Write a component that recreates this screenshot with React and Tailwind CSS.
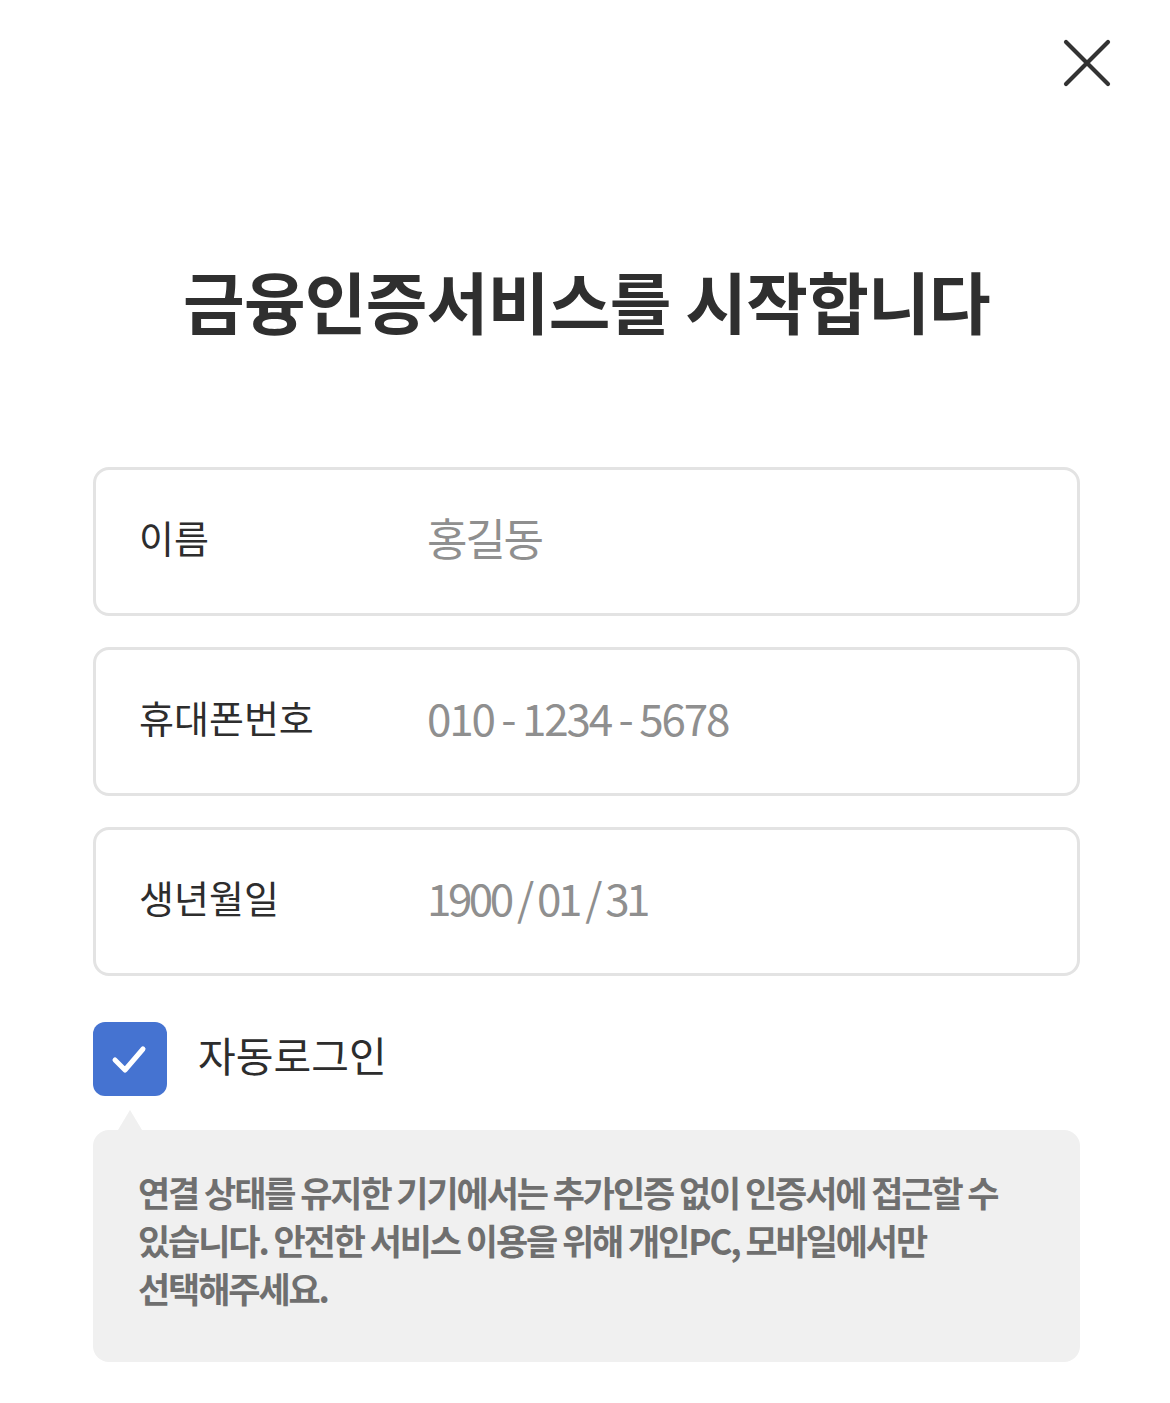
import { useState } from 'react';

const font = { fontFamily: '"Noto Sans CJK KR", "Noto Sans", sans-serif' };

function Field({ label, value, tight }) {
  return (
    <div className="flex items-center h-[149px] rounded-[16px] border-[3px] border-[#e3e3e3] pl-[43px] pb-[10px]">
      <span className="w-[288px] text-[38px] tracking-[0em] text-[#2d2d2d]">{label}</span>
      <span className={`text-[44px] text-[#8f8f8f] ${tight ? 'tracking-[-0.08em]' : 'tracking-[-0.05em]'}`}>{value}</span>
    </div>
  );
}

export default function App() {
  const [checked, setChecked] = useState(true);

  return (
    <div className="relative w-[1170px] h-[1403px] bg-white" style={font}>
      <button className="absolute top-[38px] right-[58px] w-[50px] h-[50px]" aria-label="닫기">
        <svg viewBox="0 0 50 50" className="w-[50px] h-[50px]">
          <path d="M4 4 L46 46 M46 4 L4 46" stroke="#333" strokeWidth="4.2" strokeLinecap="round" />
        </svg>
      </button>

      <div className="pt-[254px] pl-[93px] pr-[90px]">
        <h1 className="text-center text-[67px] font-bold tracking-[-0.01em] text-[#2f2f2f] leading-[92px]">
          금융인증서비스를 시작합니다
        </h1>

        <div className="mt-[121px] flex flex-col gap-[31px]">
          <Field label="이름" value="홍길동" />
          <Field label="휴대폰번호" value="010 - 1234 - 5678" />
          <Field label="생년월일" value="1900 / 01 / 31" tight />
        </div>

        <label className="mt-[46px] flex items-center gap-[31px] cursor-pointer" onClick={() => setChecked(!checked)}>
          <span className={`flex items-center justify-center w-[74px] h-[74px] rounded-[12px] ${checked ? 'bg-[#4573d1]' : 'bg-white border-[3px] border-[#ccc]'}`}>
            {checked && (
              <svg viewBox="0 0 40 40" className="w-[40px] h-[40px]">
                <path d="M5 21 L15 31 L33 10" fill="none" stroke="#fff" strokeWidth="5" strokeLinecap="round" strokeLinejoin="round" />
              </svg>
            )}
          </span>
          <span className="text-[41px] tracking-[0em] text-[#2d2d2d] pb-[8px]">자동로그인</span>
        </label>

        <div className="relative mt-[34px] rounded-[16px] bg-[#f0f0f0] pl-[45px] pr-[40px] pt-[38px] pb-[50px]">
          <div className="absolute -top-[20px] left-[25px] w-0 h-0 border-l-[12px] border-r-[12px] border-b-[20px] border-l-transparent border-r-transparent border-b-[#f0f0f0]" />
          <p className="text-[35px] font-bold leading-[48px] tracking-[-0.06em] text-[#6f6f6f] break-keep">
            연결 상태를 유지한 기기에서는 추가인증 없이 인증서에 접근할 수 있습니다. 안전한 서비스 이용을 위해 개인PC, 모바일에서만 선택해주세요.
          </p>
        </div>
      </div>
    </div>
  );
}
